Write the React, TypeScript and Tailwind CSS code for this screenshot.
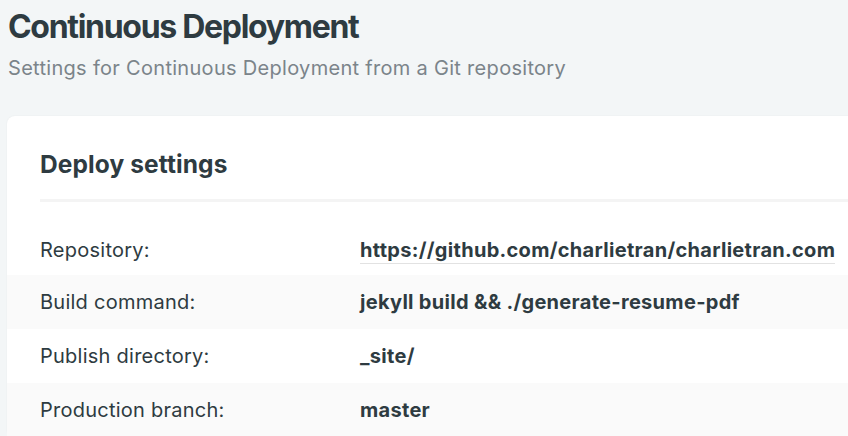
import React from "react";

const rows = [
  { label: "Repository:", value: "https://github.com/charlietran/charlietran.com", link: true },
  { label: "Build command:", value: "jekyll build && ./generate-resume-pdf" },
  { label: "Publish directory:", value: "_site/" },
  { label: "Production branch:", value: "master" },
];

export default function App() {
  return (
    <div
      className="w-[848px] h-[436px] overflow-hidden bg-[#f3f6f7] text-[#2e3b41]"
      style={{ fontFamily: "Inter, 'Noto Sans', sans-serif" }}
    >
      <div className="pl-2 pt-[9px]">
        <h1 className="text-[32px] leading-[36px] font-bold tracking-[-1.3px]">Continuous Deployment</h1>
        <p className="mt-[11px] text-[20px] leading-[24px] tracking-[0.3px] text-[#7b848a]">
          Settings for Continuous Deployment from a Git repository
        </p>
      </div>
      <div className="ml-[7px] mt-[36px] w-[900px] rounded-lg bg-white shadow-[0_0_2px_rgba(0,0,0,0.06)]">
        <div className="pl-[33px] pt-[32px]">
          <h2 className="text-[24.5px] leading-[32px] font-bold tracking-[0.1px]">Deploy settings</h2>
          <div className="mt-[19px] h-[3px] bg-[#f4f4f4]" />
        </div>
        <div className="pt-[19px]">
          {rows.map((r, i) => (
            <div
              key={r.label}
              className={`flex items-center h-[54px] pl-[33px] text-[20px] ${i % 2 === 1 ? "bg-[#fafafa]" : "bg-white"} ${r.link ? "pt-[3px]" : ""}`}
            >
              <div className="w-[320px] tracking-[0.25px]">{r.label}</div>
              <div className="font-bold tracking-[0.3px]">
                {r.link ? (
                  <span className="border-b-[1.5px] border-[#e2e2e2] pb-[1px]">{r.value}</span>
                ) : (
                  r.value
                )}
              </div>
            </div>
          ))}
        </div>
      </div>
    </div>
  );
}
